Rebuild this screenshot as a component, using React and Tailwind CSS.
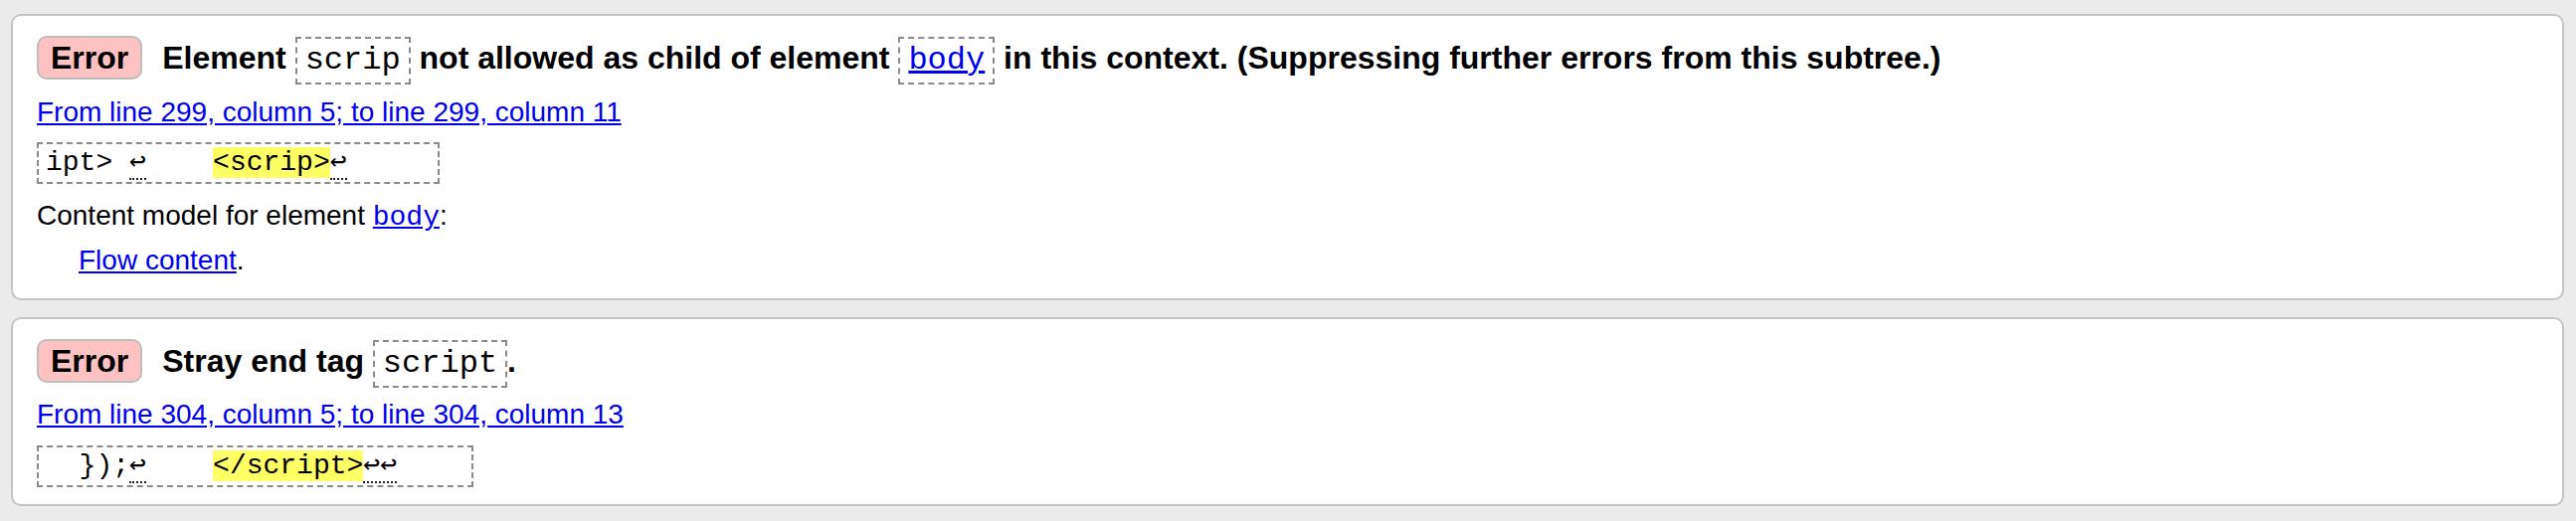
const sans = "font-['Liberation_Sans',Arial,sans-serif]";
const mono = "font-['Liberation_Mono','DejaVu_Sans_Mono',monospace] font-normal";

function Badge() {
  return (
    <span className="mr-5 inline-block shrink-0 rounded-[10px] border-2 border-[#bdbdbd] bg-[#ffc2c2] px-3 text-[32px] font-bold leading-[40px] text-black">
      Error
    </span>
  );
}

function Code({ children }) {
  return (
    <code className={`${mono} inline-block h-[48px] border-2 border-dashed border-[#8a8a8a] px-2 align-middle text-[32px] leading-[44px]`}>
      {children}
    </code>
  );
}

// the little return arrow with the dotted rule under it
function Nl({ n = 1 }) {
  return (
    <span className="border-b-2 border-dotted border-[#222]">{'\u21A9'.repeat(n)}</span>
  );
}

function Extract({ width, children }) {
  return (
    <div
      className={`${mono} ${width} h-[42px] overflow-hidden whitespace-pre border-2 border-dashed border-[#8a8a8a] pl-[7px] text-[28px] leading-[38px] text-black`}
    >
      {children}
    </div>
  );
}

function Hl({ children }) {
  return <mark className="bg-[#ffff66] text-black">{children}</mark>;
}

function Heading({ children }) {
  return (
    <div className="flex h-[48px] items-center">
      <Badge />
      <p className="h-[48px] whitespace-nowrap text-[32px] font-bold leading-[48px] text-black">{children}</p>
    </div>
  );
}

function Loc({ children }) {
  return (
    <p className="h-[32px] text-[28px] leading-[32px]">
      <a href="#" className="text-[#0000ee] underline">
        {children}
      </a>
    </p>
  );
}

export default function App() {
  return (
    <div className={`${sans} h-[524px] overflow-hidden bg-[#ebebeb] pt-[14px] pl-[11px] pr-[12px]`}>
      <div className="flex flex-col gap-[17px]">
        <section className="rounded-[10px] border-2 border-[#c4c4c4] bg-white pt-[18px] pb-[22px] pl-[24px]">
          <Heading>
            Element <Code>scrip</Code> not allowed as child of element{' '}
            <Code>
              <a href="#" className="text-[#0000ee] underline">body</a>
            </Code>{' '}
            in this context. (Suppressing further errors from this subtree.)
          </Heading>
          <div className="mt-[15px]">
            <Loc>From line 299, column 5; to line 299, column 11</Loc>
          </div>
          <div className="mt-[14px]">
            <Extract width="w-[405px]">
              {'ipt> '}
              <Nl />
              {'    '}
              <Hl>{'<scrip>'}</Hl>
              <Nl />
            </Extract>
          </div>
          <p className="mt-[16px] h-[32px] text-[28px] leading-[32px] text-black">
            Content model for element{' '}
            <a href="#" className={`${mono} text-[#0000ee] underline`}>body</a>:
          </p>
          <p className="mt-[13px] h-[32px] pl-[42px] text-[28px] leading-[32px] text-black">
            <a href="#" className="text-[#0000ee] underline">Flow content</a>.
          </p>
        </section>

        <section className="rounded-[10px] border-2 border-[#c4c4c4] bg-white pt-[18px] pb-[17px] pl-[24px]">
          <Heading>
            Stray end tag <Code>script</Code>.
          </Heading>
          <div className="mt-[14px]">
            <Loc>From line 304, column 5; to line 304, column 13</Loc>
          </div>
          <div className="mt-[15px]">
            <Extract width="w-[439px]">
              {'  });'}
              <Nl />
              {'    '}
              <Hl>{'</script>'}</Hl>
              <Nl n={2} />
            </Extract>
          </div>
        </section>
      </div>
    </div>
  );
}
